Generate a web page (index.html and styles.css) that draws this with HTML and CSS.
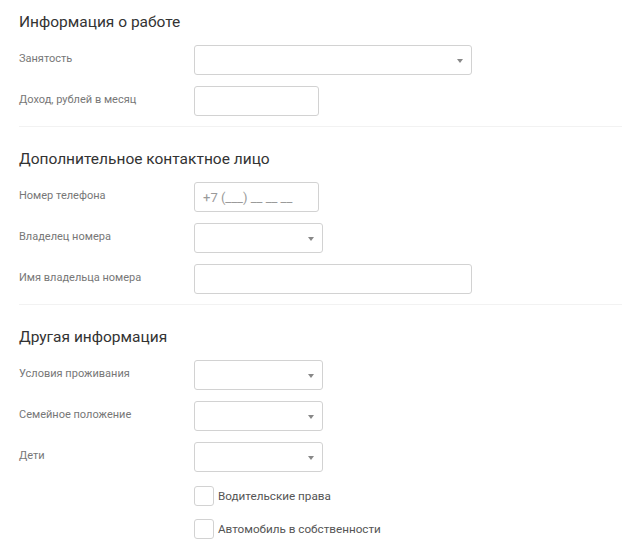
FILE: index.html
```html
<!DOCTYPE html>
<html lang="ru">
<head>
    <meta charset="UTF-8">
    <meta name="viewport" content="width=device-width, initial-scale=1.0">
    <title>Анкета</title>
    <link rel="stylesheet" href="styles.css">
</head>
<body>
    <form class="form">
        <!-- Информация о работе -->
        <section class="section section-first">
            <h2>Информация о работе</h2>
            <div class="row">
                <label class="label">Занятость</label>
                <div class="select select-wide"></div>
            </div>
            <div class="row">
                <label class="label">Доход, рублей в месяц</label>
                <input class="input input-short" type="text">
            </div>
        </section>

        <!-- Дополнительное контактное лицо -->
        <section class="section">
            <h2>Дополнительное контактное лицо</h2>
            <div class="row">
                <label class="label">Номер телефона</label>
                <input class="input input-short" type="text" placeholder="+7 (___) __ __ __">
            </div>
            <div class="row">
                <label class="label">Владелец номера</label>
                <div class="select select-short"></div>
            </div>
            <div class="row">
                <label class="label">Имя владельца номера</label>
                <input class="input input-wide" type="text">
            </div>
        </section>

        <!-- Другая информация -->
        <section class="section section-last">
            <h2>Другая информация</h2>
            <div class="row">
                <label class="label">Условия проживания</label>
                <div class="select select-short"></div>
            </div>
            <div class="row">
                <label class="label">Семейное положение</label>
                <div class="select select-short"></div>
            </div>
            <div class="row">
                <label class="label">Дети</label>
                <div class="select select-short"></div>
            </div>
            <div class="checks">
                <label class="check"><span class="box"></span>Водительские права</label>
                <label class="check"><span class="box"></span>Автомобиль в собственности</label>
            </div>
        </section>
    </form>
</body>
</html>
```

FILE: styles.css
```css
body {
    font-family: Roboto, "Liberation Sans", sans-serif;
    margin: 0;
    background: #fff;
    color: #333;
}
.form {
    padding-left: 19px;
}
.section {
    padding: 22px 0 10px;
    border-bottom: 1px solid #f2f2f2;
}
.section-first {
    padding-top: 12px;
}
.section-last {
    border-bottom: none;
}
h2 {
    margin: 0 0 13px;
    font-size: 15.5px;
    line-height: 20px;
    font-weight: 400;
    color: #333;
}
.row {
    display: flex;
    align-items: center;
    margin-bottom: 11px;
}
.section > .row:last-child {
    margin-bottom: 0;
}
.label {
    width: 175px;
    font-size: 11px;
    color: #777;
    margin-top: -3px;
}
.input, .select {
    box-sizing: border-box;
    height: 30px;
    border: 1px solid #d2d2d2;
    border-radius: 3px;
    background: #fff;
    font-family: inherit;
    font-size: 13px;
    padding: 0 8px;
    color: #555;
}
.input::placeholder {
    color: #9a9a9a;
}
.input-short {
    width: 125px;
}
.input-wide, .select-wide {
    width: 278px;
}
.select {
    position: relative;
}
.select-short {
    width: 129px;
}
.select::after {
    content: "";
    position: absolute;
    right: 8px;
    top: 13px;
    border-left: 3px solid transparent;
    border-right: 3px solid transparent;
    border-top: 4px solid #888;
}
.checks {
    padding: 3px 0 0 175px;
}
.check {
    display: flex;
    align-items: center;
    font-size: 11.7px;
    color: #555;
    margin-bottom: 13px;
}
.box {
    box-sizing: border-box;
    width: 20px;
    height: 20px;
    border: 1px solid #d2d2d2;
    border-radius: 3px;
    margin-right: 4px;
}
```
